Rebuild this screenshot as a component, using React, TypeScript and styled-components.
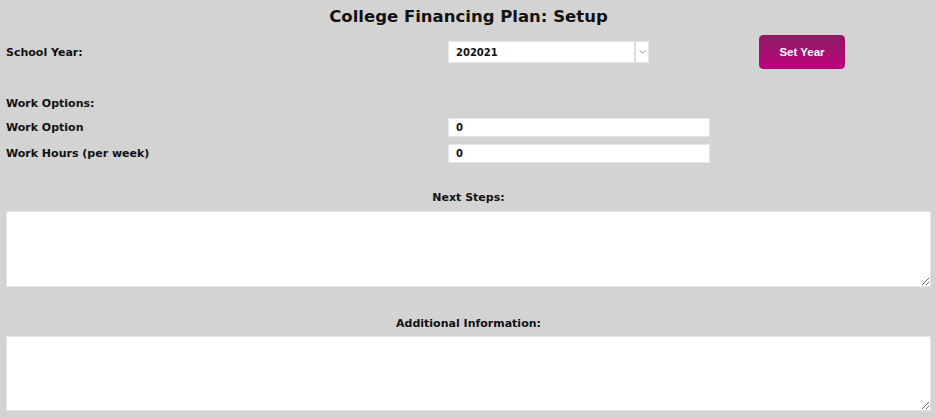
import React from 'react'
import styled, { createGlobalStyle } from 'styled-components'

const GlobalStyle = createGlobalStyle`
  html, body {
    margin: 0;
    padding: 0;
    background: #d3d3d3;
  }
  body {
    font-family: 'DejaVu Sans', 'Liberation Sans', sans-serif;
    color: #111;
  }
`

const Page = styled.div`
  padding: 0 5px 0 6px;
`

const Title = styled.h1`
  margin: 0;
  height: 34px;
  line-height: 34px;
  text-align: center;
  font-size: 16.5px;
  font-weight: bold;
  color: #111;
`

const YearRow = styled.div`
  display: flex;
  align-items: center;
  height: 34px;
  margin-top: 1px;
`

const Label = styled.div`
  width: 442px;
  flex: none;
  font-size: 11px;
  font-weight: bold;
`

const SelectBox = styled.div`
  display: flex;
  width: 201px;
  height: 22px;
  background: #fff;
  border: 1px solid #e6e6e6;
  box-sizing: border-box;
`

const SelectValue = styled.div`
  flex: 1;
  display: flex;
  align-items: center;
  padding-left: 7px;
  font-size: 10px;
  font-weight: bold;
  border-right: 2px solid #dcdcdc;
`

const SelectArrow = styled.div`
  width: 12px;
  display: flex;
  align-items: center;
  justify-content: center;
`

const SetYearButton = styled.button`
  margin-left: 110px;
  width: 86px;
  height: 34px;
  border: 1px solid #a0106a;
  border-radius: 4px;
  background: linear-gradient(to bottom, #8c1d62, #c0007f);
  color: #fff;
  font-family: 'Liberation Sans', Arial, sans-serif;
  font-weight: bold;
  font-size: 11.5px;
  cursor: pointer;
`

const SectionHeading = styled.div`
  margin-top: 25px;
  height: 20px;
  line-height: 20px;
  font-size: 11px;
  font-weight: bold;
`

const FieldRow = styled.div`
  display: flex;
  align-items: center;
  height: 26px;
`

const TextInput = styled.div`
  width: 262px;
  height: 19px;
  box-sizing: border-box;
  background: #fff;
  border: 1px solid #e6e6e6;
  padding-left: 7px;
  display: flex;
  align-items: center;
  font-size: 10px;
  font-weight: bold;
`

const CenterLabel = styled.div<{ $top: number; $bottom: number }>`
  margin-top: ${p => p.$top}px;
  margin-bottom: ${p => p.$bottom}px;
  height: 20px;
  line-height: 20px;
  text-align: center;
  font-size: 11px;
  font-weight: bold;
`

const NotesArea = styled.textarea<{ $height: number }>`
  display: block;
  width: 100%;
  height: ${p => p.$height}px;
  box-sizing: border-box;
  border: 1px solid #e4e4e4;
  background: #fff;
  margin: 0;
  resize: vertical;
  font-family: inherit;
`

export default function App() {
  return (
    <>
      <GlobalStyle />
      <Page>
        <Title>College Financing Plan: Setup</Title>
        <YearRow>
          <Label>School Year:</Label>
          <SelectBox>
            <SelectValue>202021</SelectValue>
            <SelectArrow>
              <svg width="7" height="4" viewBox="0 0 7 4">
                <path d="M0.5 0.5 L3.5 3 L6.5 0.5" fill="none" stroke="#999" strokeWidth="1" />
              </svg>
            </SelectArrow>
          </SelectBox>
          <SetYearButton>Set Year</SetYearButton>
        </YearRow>
        <SectionHeading>Work Options:</SectionHeading>
        <FieldRow>
          <Label>Work Option</Label>
          <TextInput>0</TextInput>
        </FieldRow>
        <FieldRow>
          <Label>Work Hours (per week)</Label>
          <TextInput>0</TextInput>
        </FieldRow>
        <CenterLabel $top={22} $bottom={3}>Next Steps:</CenterLabel>
        <NotesArea $height={76} />
        <CenterLabel $top={27} $bottom={2}>Additional Information:</CenterLabel>
        <NotesArea $height={75} />
      </Page>
    </>
  )
}
